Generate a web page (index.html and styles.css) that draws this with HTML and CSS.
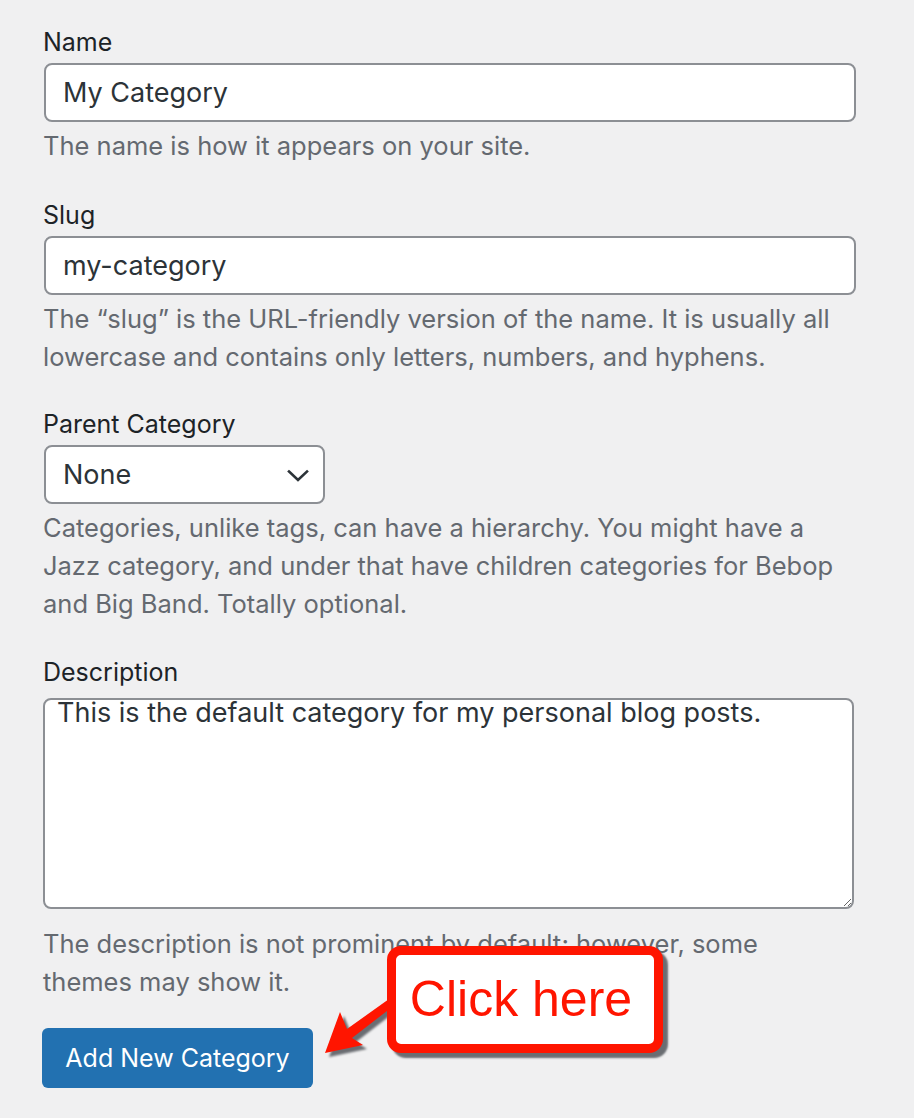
FILE: index.html
```html
<!DOCTYPE html>
<html lang="en">
<head>
<meta charset="utf-8">
<title>Add New Category</title>
<link rel="stylesheet" href="styles.css">
</head>
<body>
<form class="term-form">
  <div class="field field-name">
    <label class="field-label" for="tag-name">Name</label>
    <input class="text-input" id="tag-name" type="text" value="My Category">
    <p class="field-desc">The name is how it appears on your site.</p>
  </div>
  <div class="field">
    <label class="field-label" for="tag-slug">Slug</label>
    <input class="text-input" id="tag-slug" type="text" value="my-category">
    <p class="field-desc">The “slug” is the URL-friendly version of the name. It is usually all lowercase and contains only letters, numbers, and hyphens.</p>
  </div>
  <div class="field field-parent">
    <label class="field-label">Parent Category</label>
    <div class="select-box">
      <span class="select-value">None</span>
      <svg class="chevron" width="22" height="14" viewBox="0 0 22 14"><path d="M2 2.5 L11 11 L20 2.5" fill="none" stroke="#2c3338" stroke-width="2.6" stroke-linecap="square"/></svg>
    </div>
    <p class="field-desc">Categories, unlike tags, can have a hierarchy. You might have a Jazz category, and under that have children categories for Bebop and Big Band. Totally optional.</p>
  </div>
  <div class="field field-description">
    <label class="field-label" for="tag-desc">Description</label>
    <textarea class="text-area" id="tag-desc">This is the default category for my personal blog posts.</textarea>
    <p class="field-desc desc-after-area">The description is not prominent by default; however, some themes may show it.</p>
  </div>
  <div class="submit-row">
    <button type="button" class="primary-btn">Add New Category</button>
  </div>
</form>

<svg class="callout-arrow" width="914" height="1118" viewBox="0 0 914 1118">
  <polygon points="325,1053 340,1012 347,1029 396,994 396,1004 352,1038 363,1045" fill="#ff1500"/>
</svg>
<div class="callout">Click here</div>
</body>
</html>
```

FILE: styles.css
```css
html, body {
  margin: 0;
  padding: 0;
}
body {
  background: #f0f0f1;
  width: 914px;
  height: 1118px;
  position: relative;
  overflow: hidden;
  font-family: Inter, "Open Sans", "DejaVu Sans", sans-serif;
}
.term-form {
  padding: 23px 0 0 43px;
}
.field {
  margin-bottom: 29px;
}
.field-name {
  margin-bottom: 31px;
}
.field-parent {
  margin-bottom: 30px;
}
.field-description {
  margin-bottom: 27px;
}
.field-label {
  display: block;
  font-size: 25px;
  line-height: 38px;
  color: #1d2327;
  margin-bottom: 2px;
}
.text-input {
  display: block;
  box-sizing: border-box;
  width: 812px;
  height: 59px;
  margin: 0 0 0 1px;
  padding: 0 17px;
  border: 2px solid #8c8f94;
  border-radius: 8px;
  background: #fff;
  font-family: inherit;
  font-size: 27px;
  color: #2c3338;
  outline: none;
}
.field-desc {
  margin: 5px 0 0;
  font-size: 25.5px;
  line-height: 38px;
  color: #646970;
  width: 800px;
}
.select-box {
  box-sizing: border-box;
  width: 281px;
  height: 59px;
  margin-left: 1px;
  border: 2px solid #8c8f94;
  border-radius: 8px;
  background: #fff;
  display: flex;
  align-items: center;
  justify-content: space-between;
  padding: 0 14px 0 17px;
}
.select-value {
  font-size: 27px;
  color: #2c3338;
}
.chevron {
  display: block;
  margin-top: 2px;
}
.text-area {
  display: block;
  box-sizing: border-box;
  width: 811px;
  height: 211px;
  margin: 7px 0 0;
  padding: 1px 12px 0;
  border: 2px solid #8c8f94;
  border-radius: 8px;
  background: #fff;
  font-family: inherit;
  font-size: 27px;
  line-height: 24px;
  color: #2c3338;
  outline: none;
}
.desc-after-area {
  margin-top: 16px;
}
.submit-row {
  display: flex;
}
.primary-btn {
  box-sizing: border-box;
  height: 60px;
  width: 271px;
  margin-left: -1px;
  padding: 0;
  border: none;
  border-radius: 6px;
  background: #2271b1;
  color: #fff;
  font-family: inherit;
  font-size: 25px;
}
.callout-arrow {
  position: absolute;
  left: 0;
  top: 0;
  filter: drop-shadow(4px 4px 1px #6a6d72);
}
.callout {
  position: absolute;
  left: 387px;
  top: 946px;
  box-sizing: border-box;
  width: 276px;
  height: 107px;
  border: 9px solid #ff1500;
  border-radius: 14px;
  background: #fff;
  box-shadow: 5px 5px 2px #6a6d72;
  display: flex;
  align-items: center;
  justify-content: center;
  font-family: "Liberation Sans", Arial, sans-serif;
  font-size: 50px;
  color: #ff1500;
  padding: 0 8px 2px 0;
}
```
